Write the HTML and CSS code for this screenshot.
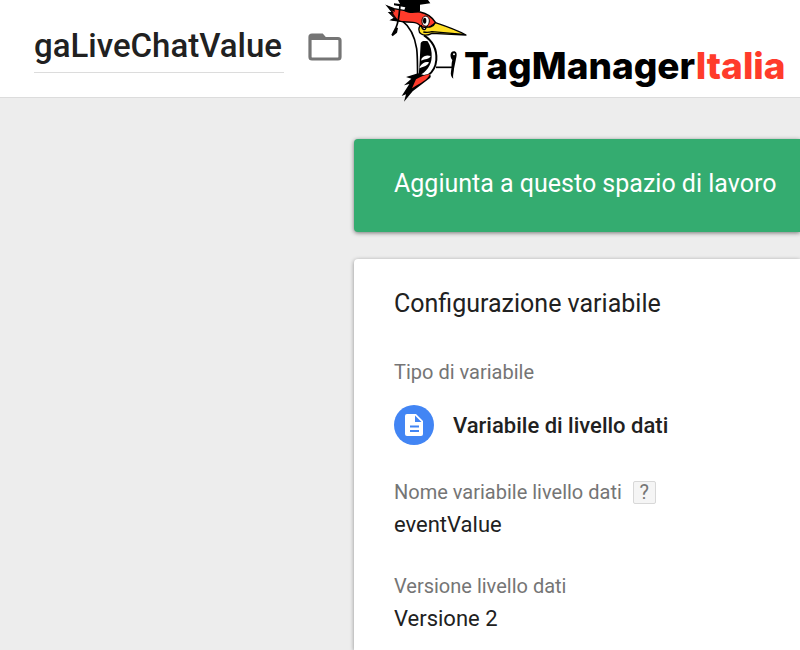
FILE: index.html
```
<!DOCTYPE html>
<html lang="it">
  <head>
    <meta charset="UTF-8" />
    <meta name="viewport" content="width=device-width, initial-scale=1.0" />
    <title>gaLiveChatValue - TagManagerItalia</title>
    <link rel="stylesheet" href="styles.css">
  </head>
  <body>
    <header class="header">
      <input class="title" type="text" value="gaLiveChatValue" aria-label="Nome variabile" spellcheck="false">
      <button class="folder" type="button" aria-label="Cartella">
        <svg viewBox="0 0 34 28" width="34" height="28">
          <path d="M4 2h10l3 3.500h13a2 2 0 0 1 2 2V24a2 2 0 0 1-2 2H4a2 2 0 0 1-2-2V4a2 2 0 0 1 2-2z" fill="none" stroke="#757575" stroke-width="3.200" />
          <path d="M2 2h12l4 5H2z" fill="#757575" />
        </svg>
      </button>
      <div class="logo">
        <svg class="bird" viewBox="0 0 300 315" aria-hidden="true">
          <!-- body -->
          <path d="M66 60C88 76 103 108 110 150C114 178 110 205 110 232L145 226C170 200 175 165 158 136C150 120 142 112 132 106L120 60z" fill="#fff" />
          <path d="M66 62C90 80 104 108 110 146C113 170 112 195 113 230" fill="none" stroke="#000" stroke-width="5" />
          <path d="M132 106C160 124 171 150 169 180C167 202 158 216 144 226" fill="none" stroke="#000" stroke-width="6" />
          <!-- wing -->
          <path d="M122 130C124 122 134 123 143 124C152 138 156 154 155 172C154 196 140 216 116 228C119 195 120 160 122 130z" fill="#000" />
          <path d="M124 177C132 166 142 165 152 168C147 179 136 176 124 182z" fill="#fff" />
          <path d="M119 201C127 187 138 184 147 187C143 199 132 198 119 205z" fill="#fff" />
          <!-- tail -->
          <path d="M114 220L78 231L94 236L72 256L88 252L65 288L78 283L72 305L98 274L150 234C158 224 144 220 132 225z" fill="#000" />
          <path d="M96 265L108 238C122 229 134 226 150 222C143 240 122 248 96 265z" fill="#ff3b2b" />
          <!-- head -->
          <path d="M22 18L42 26L75 32L120 36C140 40 156 50 167 68L145 84L122 80C116 66 96 66 66 65L34 60L44 54L28 38L38 38z" fill="#ff3b2b" stroke="#000" stroke-width="4" />
          <path d="M22 18L44 26L44 36L28 27L38 38L28 35L46 53L34 61L68 66L52 58z" fill="#000" />
          <!-- beak -->
          <path d="M124 76C114 80 114 96 124 102C134 108 148 104 156 100L258 105C230 90 196 78 166 68C160 80 148 84 138 80C138 94 126 90 124 76z" fill="#ffdf24" stroke="#000" stroke-width="4" stroke-linejoin="round" />
          <path d="M130 96Q143 99 156 95L250 103" fill="none" stroke="#000" stroke-width="4" />
          <path d="M126 64C126 50 134 46 142 50C150 56 150 68 142 78C134 80 126 76 126 64z" fill="#fff" stroke="#000" stroke-width="3" />
          <ellipse cx="134" cy="62" rx="5" ry="9" fill="#000" />
          <!-- hat -->
          <path d="M54 0H144L151 10L120 14L120 34C106 42 82 40 72 32L76 22L42 16V10L60 12z" fill="#000" />
          <path d="M60 14C58 38 58 60 48 83" fill="none" stroke="#000" stroke-width="5" />
          <path d="M46 81L54 84L51 98L38 109L34 104z" fill="#000" />
          <!-- leg and claw -->
          <path d="M168 202H216" fill="none" stroke="#000" stroke-width="5" />
          <path d="M222 154C208 154 210 174 217 180C213 192 216 203 213 214C211 225 214 232 220 236C218 226 221 220 222 206L229 172C232 160 228 154 222 154z" fill="#000" />
          <circle cx="222" cy="163" r="3" fill="#fff" />
        </svg>
        <span class="wordmark">TagManager<span class="accent">Italia</span></span>
      </div>
    </header>

    <main class="content">
      <div class="banner">Aggiunta a questo spazio di lavoro</div>

      <section class="card">
        <h1 class="card-title">Configurazione variabile</h1>

        <div class="label">Tipo di variabile</div>
        <div class="type">
          <svg class="type-icon" viewBox="0 0 40 40" aria-hidden="true">
            <circle cx="20" cy="20" r="20" fill="#4285f4" />
            <path d="M13 9h9l7 7v13a2 2 0 0 1-2 2H13a2 2 0 0 1-2-2V11a2 2 0 0 1 2-2z" fill="#fff" />
            <path d="M21 10.500v6.500h6.500zM16 20.500h9v2h-9zM16 25h9v2h-9z" fill="#4285f4" />
          </svg>
          <span>Variabile di livello dati</span>
        </div>

        <div class="label">Nome variabile livello dati <button class="help" type="button">?</button></div>
        <div class="value">eventValue</div>

        <div class="label">Versione livello dati</div>
        <div class="value">Versione 2</div>
      </section>
    </main>
  </body>
</html>
```
FILE: styles.css
```
* {
  box-sizing: border-box;
}
body {
  margin: 0;
  min-height: 100vh;
  display: flex;
  flex-direction: column;
  font-family: Roboto, sans-serif;
  color: #212121;
  background-color: #ededed;
}
.header {
  display: flex;
  align-items: flex-start;
  height: 98px;
  padding-left: 34px;
  background-color: #fff;
  border-bottom: 1px solid #dcdcdc;
}
.title {
  width: 250px;
  height: 73px;
  padding: 19px 0 0;
  border: 0;
  border-bottom: 1px solid #dcdcdc;
  outline: 0;
  background: none;
  font: 500 33px Roboto, sans-serif;
  color: #212121;
}
.folder {
  display: flex;
  margin: 33px 0 0 24px;
  padding: 0;
  border: 0;
  background: none;
  cursor: pointer;
}
.logo {
  display: flex;
  margin-left: 38px;
}
.bird {
  flex: none;
  width: 100px;
  height: 105px;
}
.wordmark {
  margin: 42px 0 0 -16px;
  font: 800 37px/48px Inter, sans-serif;
  color: #000;
}
.accent {
  color: #ff3b2b;
}
.content {
  flex: 1;
  display: flex;
  flex-direction: column;
  gap: 27px;
  padding: 41px 0 0 354px;
}
.banner {
  padding: 29px 0 32px 40px;
  border-radius: 4px 0 0 4px;
  background-color: #34ac70;
  box-shadow: 0 1px 4px rgba(0, 0, 0, 0.5);
  font-size: 25px;
  line-height: 32px;
  color: #fff;
}
.card {
  flex: 1;
  padding: 29px 40px 16px;
  border-radius: 4px 0 0 0;
  background-color: #fff;
  box-shadow: 0 1px 4px rgba(0, 0, 0, 0.4);
}
.card-title {
  margin: 0 0 39px;
  font-size: 25px;
  font-weight: 400;
  line-height: 32px;
}
.label {
  display: flex;
  align-items: center;
  gap: 11px;
  height: 26px;
  font-size: 20px;
  color: #757575;
}
.type {
  display: flex;
  align-items: center;
  gap: 19px;
  margin: 20px 0 34px;
  font-size: 22px;
  font-weight: 500;
}
.type-icon {
  width: 40px;
  height: 40px;
}
.help {
  width: 23px;
  height: 23px;
  padding: 0;
  border: 1px solid #d8d8d8;
  border-radius: 2px;
  background-color: #f5f5f5;
  font: 400 20px/20px Roboto, sans-serif;
  color: #757575;
}
.value {
  margin: 5px 0 33px;
  font-size: 22px;
  line-height: 30px;
}
.value:last-child {
  margin-bottom: 0;
}
```
